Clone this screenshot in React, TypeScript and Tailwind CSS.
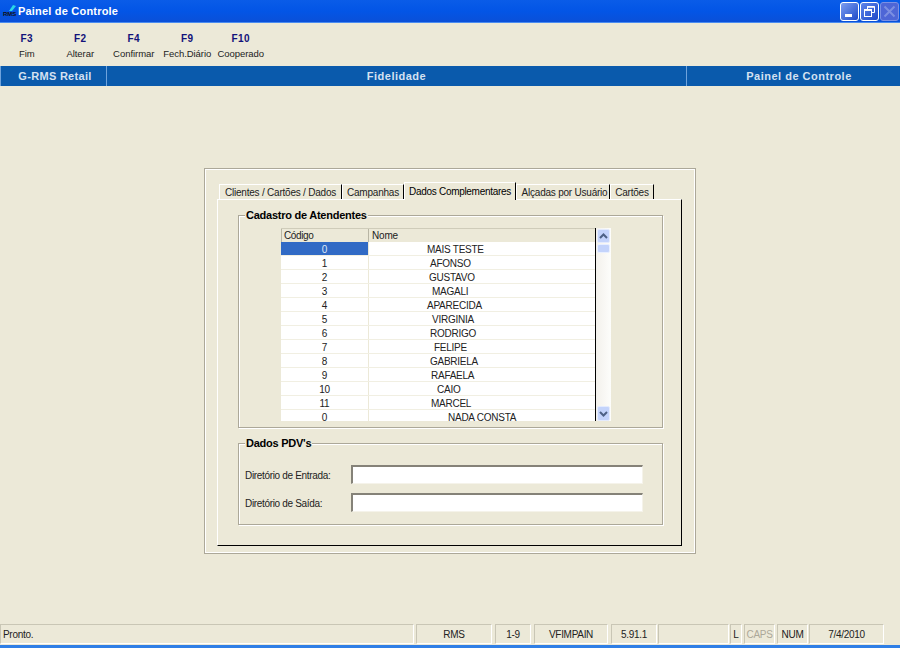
const F = "font-['Liberation_Sans',Arial,sans-serif]";

const tools = [
  ["F3", "Fim"],
  ["F2", "Alterar"],
  ["F4", "Confirmar"],
  ["F9", "Fech.Diário"],
  ["F10", "Cooperado"],
];

const rows = [
  ["0", "MAIS TESTE", "pl-[58px]"],
  ["1", "AFONSO", "pl-[61px]"],
  ["2", "GUSTAVO", "pl-[60px]"],
  ["3", "MAGALI", "pl-[63px]"],
  ["4", "APARECIDA", "pl-[58px]"],
  ["5", "VIRGINIA", "pl-[63px]"],
  ["6", "RODRIGO", "pl-[61px]"],
  ["7", "FELIPE", "pl-[65px]"],
  ["8", "GABRIELA", "pl-[61px]"],
  ["9", "RAFAELA", "pl-[62px]"],
  ["10", "CAIO", "pl-[68px]"],
  ["11", "MARCEL", "pl-[62px]"],
  ["0", "NADA CONSTA", "pl-[79px]"],
];

const statusCells = [
  ["RMS", "w-[76px] ml-[2px] justify-center", ""],
  ["1-9", "w-[36px] ml-[3px] justify-center", ""],
  ["VFIMPAIN", "w-[74px] ml-[3px] justify-center", ""],
  ["5.91.1", "w-[46px] ml-[3px] justify-center", ""],
  ["", "w-[71px] ml-[1px] justify-center", ""],
  ["L", "w-[12px] ml-[1px] justify-center", ""],
  ["CAPS", "w-[31px] ml-[2px] justify-center", "text-[#aca899]"],
  ["NUM", "w-[31px] ml-[2px] justify-center", ""],
  ["7/4/2010", "w-[75px] ml-[1px] justify-center", ""],
];

function WinButtons() {
  return (
    <div className="flex gap-[1px] mr-[1px]">
      <div className="w-[19px] h-[19px] rounded-[3px] border border-white bg-gradient-to-br from-[#7d9df0] to-[#1f48c8] flex items-end">
        <div className="w-[7px] h-[3px] bg-white ml-[4px] mb-[3px]" />
      </div>
      <div className="w-[19px] h-[19px] rounded-[3px] border border-white bg-gradient-to-br from-[#5f85ea] to-[#1f48c8] flex items-center justify-center">
        <svg width="11" height="11" viewBox="0 0 11 11" fill="none" stroke="#fff">
          <path d="M3.500 3V0.500H10.500V6.500H8" strokeWidth="1" />
          <path d="M3 1h7.500" strokeWidth="1.500" />
          <rect x="0.500" y="3.500" width="7" height="7" />
          <path d="M0.500 4.200h7" strokeWidth="1.500" />
        </svg>
      </div>
      <div className="w-[19px] h-[19px] rounded-[3px] border border-[#7b90e4] bg-[#4e66d6] flex items-center justify-center">
        <svg width="13" height="13" viewBox="0 0 13 13" stroke="#7c8fe2" strokeWidth="2">
          <path d="M1.500 1.500L11.500 11.500M11.500 1.500L1.500 11.500" />
        </svg>
      </div>
    </div>
  );
}

function Tab({ label, w, active, cls = "" }: { label: string; w: string; active?: boolean; cls?: string }) {
  if (active) {
    return (
      <div className={`${w} h-[18px] -mb-[1px] relative z-10 bg-[#ece9d8] border-t border-l border-white border-r border-r-black flex items-center justify-center pb-[1px] text-[10px] tracking-[-0.3px] text-black`}>
        {label}
      </div>
    );
  }
  return (
    <div className={`${w} ${cls} h-[15px] bg-[#ece9d8] border-t border-l border-white border-r border-r-black flex items-center justify-center text-[10px] tracking-[-0.22px] text-[#222]`}>
      {label}
    </div>
  );
}

function Group({ title, cls, children }: { title: string; cls: string; children: React.ReactNode }) {
  return (
    <div className={`relative border border-[#aca899] shadow-[1px_1px_0_#fff,inset_1px_1px_0_#fff] ${cls}`}>
      <span className="absolute -top-[7px] left-[6px] bg-[#ece9d8] px-[1px] text-[11px] leading-[13px] font-bold tracking-[-0.25px] text-black">{title}</span>
      {children}
    </div>
  );
}

function Scrollbar() {
  return (
    <div className="w-[16px] h-full bg-gradient-to-r from-[#f3f1ec] to-[#fdfdfb] flex flex-col justify-between border-l border-l-black">
      <div>
        <div className="h-[14px] mx-[1px] mt-[1px] rounded-[2px] bg-[#c3d3fb] border border-[#e4ebfd] flex items-center justify-center">
          <svg width="9" height="6" viewBox="0 0 9 6" fill="none" stroke="#4d6185" strokeWidth="2"><path d="M1 5L4.500 1.500L8 5" /></svg>
        </div>
        <div className="h-[9px] mx-[1px] mt-[1px] rounded-[2px] bg-[#c3d3fb] border border-[#e8efff]" />
      </div>
      <div className="h-[15px] mx-[1px] rounded-[2px] bg-[#c3d3fb] border border-[#e4ebfd] flex items-center justify-center">
        <svg width="9" height="6" viewBox="0 0 9 6" fill="none" stroke="#4d6185" strokeWidth="2"><path d="M1 1L4.500 4.500L8 1" /></svg>
      </div>
    </div>
  );
}

function Field({ label, cls }: { label: string; cls: string }) {
  return (
    <div className={`flex items-center ${cls}`}>
      <span className="w-[106px] pt-[2px] text-[10px] tracking-[-0.33px] text-[#222]">{label}</span>
      <div className="w-[292px] h-[19px] bg-white border-t-2 border-l-2 border-t-[#858278] border-l-[#858278] border-r border-b border-r-[#f5f3ea] border-b-[#f5f3ea]" />
    </div>
  );
}

export default function App() {
  return (
    <div className={`${F} w-[900px] h-[648px] overflow-hidden flex flex-col bg-[#ece9d8]`}>
      <div className="h-[23px] flex items-center justify-between bg-gradient-to-b from-[#0a5ce8] via-[#0355e6] to-[#0a50d8] border-b border-[#4a8cf0]">
        <div className="flex items-center">
          <svg width="16" height="14" viewBox="0 0 16 14" className="ml-[2px]">
            <path d="M7 7L11 1L14 2L10 7Z" fill="#29d6e6" />
            <text x="1" y="12" fontSize="6" fontWeight="700" fill="#111" fontFamily="Liberation Sans">RMS</text>
          </svg>
          <span className="text-[11px] font-bold text-white tracking-[0.2px]">Painel de Controle</span>
        </div>
        <WinButtons />
      </div>

      <div className="h-[43px] flex pt-[10px] items-start">
        {tools.map(([k, l]) => (
          <div key={k} className="w-[53.500px] flex flex-col items-center">
            <span className="text-[10px] leading-[12px] font-bold text-[#12127a] tracking-[0.5px]">{k}</span>
            <span className="text-[9.500px] leading-[12px] mt-[3px] tracking-[-0.05px] text-[#222] whitespace-nowrap">{l}</span>
          </div>
        ))}
      </div>

      <div className="h-[20px] flex bg-[#0a5aac] text-[11px] font-bold text-[#d5e1f1] tracking-[0.5px]">
        <div className="w-[107px] pl-[3px] tracking-[0.3px] flex items-center justify-center border-l border-r border-[#6fa3dc]">G-RMS Retail</div>
        <div className="w-[580px] flex items-center justify-center border-r border-[#6fa3dc]">Fidelidade</div>
        <div className="flex-1 flex items-center justify-center pl-[11px]">Painel de Controle</div>
      </div>

      <div className="flex-1 flex justify-center items-start pt-[82px]">
        <div className="w-[492px] h-[386px] border border-[#aca899] shadow-[inset_1px_1px_0_#fff,inset_-1px_-1px_0_#fff] pl-[12px] pt-[13px]">
          <div className="flex pl-[2px] h-[17px] items-end">
            <Tab label="Clientes / Cartões / Dados" w="w-[123px]" />
            <Tab label="Campanhas" w="w-[62px]" />
            <Tab label="Dados Complementares" w="w-[112px]" active />
            <Tab label="Alçadas por Usuário" w="w-[94px]" cls="pl-[3px]" />
            <Tab label="Cartões" w="w-[44px]" />
          </div>
          <div className="w-[465px] h-[347px] border-t border-l border-white border-r border-b border-r-black border-b-black pt-[15px] pl-[20px]">
            <Group title="Cadastro de Atendentes" cls="w-[425px] h-[213px] pt-[12px] pl-[42px]">
              <div className="flex h-[193px] w-[330px] overflow-hidden">
                <div className="w-[314px] flex flex-col overflow-hidden">
                  <div className="h-[14px] shrink-0 flex bg-[#ece9d8] border-t border-[#cfccba] text-[10px] leading-[13px] text-[#222]">
                    <div className="w-[88px] pl-[2px] tracking-[-0.4px] border-l border-r border-[#b8b5a4]">Código</div>
                    <div className="flex-1 pl-[3px] tracking-[-0.2px]">Nome</div>
                  </div>
                  {rows.map(([c, n, pl], i) => (
                    <div key={i} className="h-[14px] shrink-0 flex bg-white border-b border-[#f1efe2] text-[10px] leading-[15px] tracking-[-0.25px] text-[#222]">
                      <div className={`w-[88px] text-center border-r border-[#ece9d8] ${i === 0 ? "bg-[#316ac5] text-[#dfe8f6]" : ""}`}>{c}</div>
                      <div className={`flex-1 whitespace-nowrap ${pl}`}>{n}</div>
                    </div>
                  ))}
                </div>
                <Scrollbar />
              </div>
            </Group>
            <Group title="Dados PDV's" cls="w-[425px] h-[82px] mt-[15px] pl-[6px] pt-[21px]">
              <Field label="Diretório de Entrada:" cls="" />
              <Field label="Diretório de Saída:" cls="mt-[9px]" />
            </Group>
          </div>
        </div>
      </div>

      <div className="h-[24px] flex pt-[3px] text-[10px] tracking-[-0.3px] text-[#222]">
        <div className="w-[414px] h-[20px] pl-[2px] flex items-center border border-[#c9c6b5] border-b-white border-r-white">Pronto.</div>
        {statusCells.map(([t, c, x], i) => (
          <div key={i} className={`${c} ${x} h-[20px] flex items-center border border-[#c9c6b5] border-b-white border-r-white`}>{t}</div>
        ))}
      </div>
      <div className="h-[3px] bg-[#2f7fe6]" />
    </div>
  );
}
